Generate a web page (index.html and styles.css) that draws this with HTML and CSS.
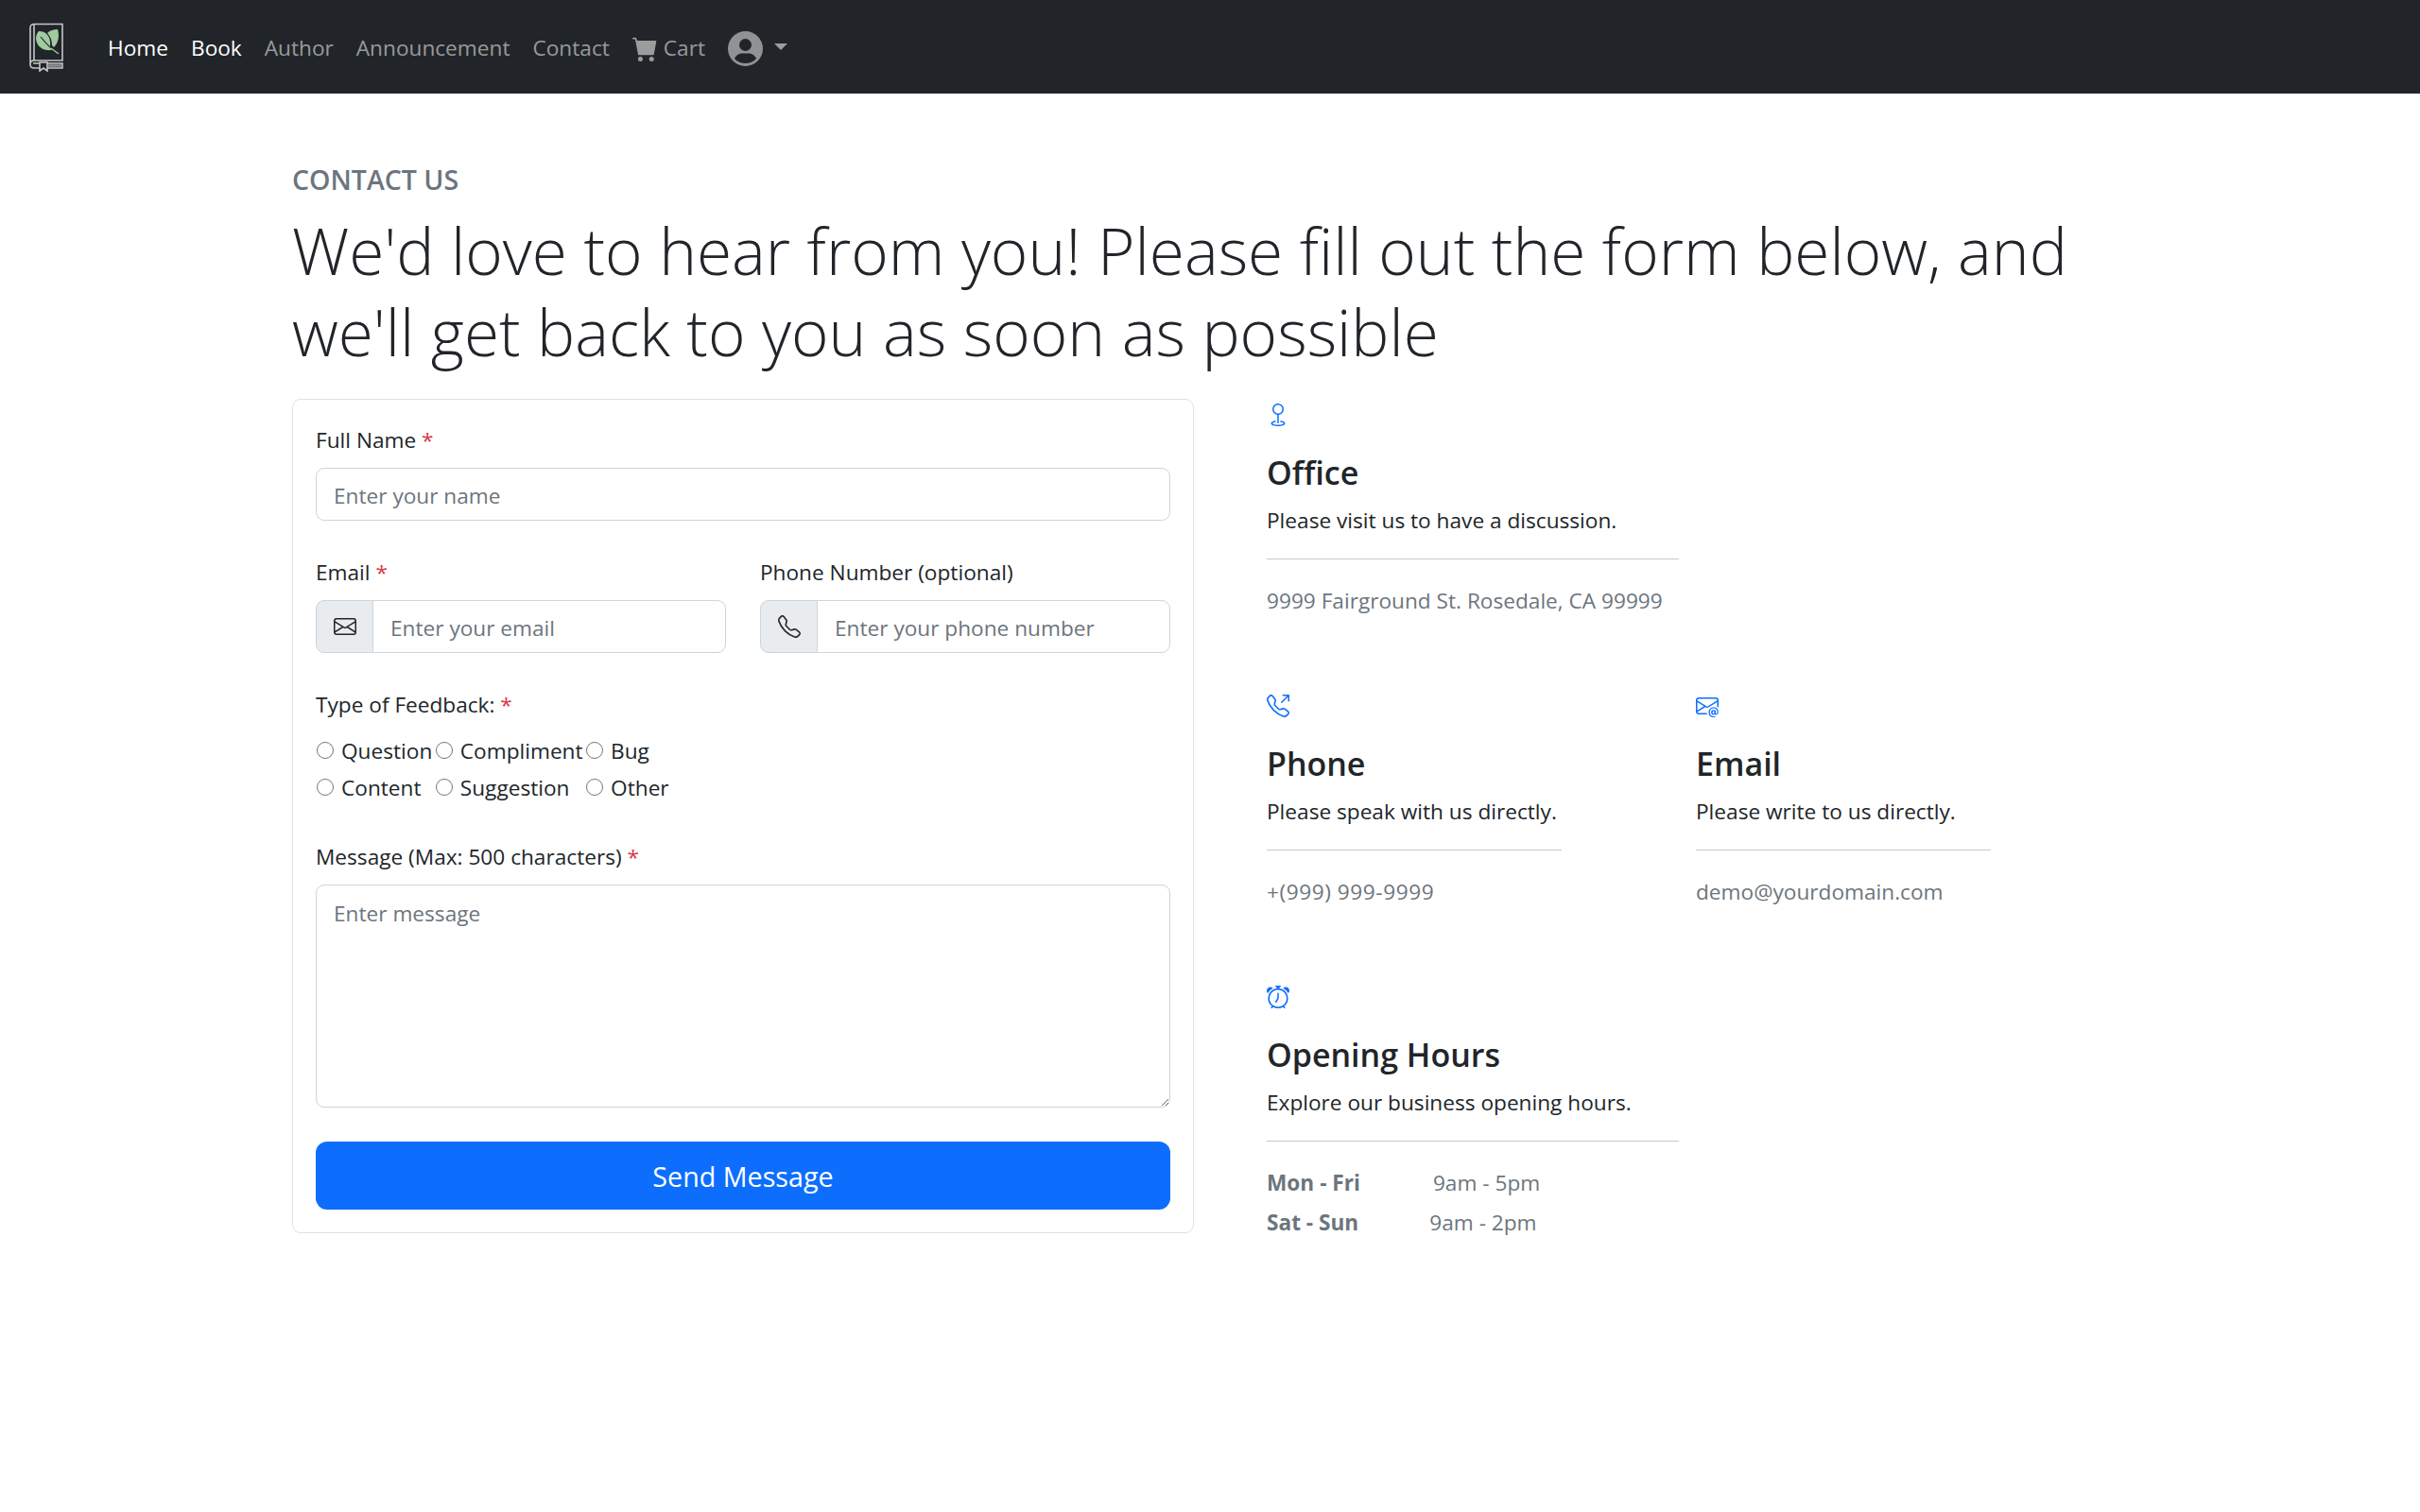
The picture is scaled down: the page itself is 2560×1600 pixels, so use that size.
FILE: index.html
```html
<!DOCTYPE html>
<html lang="en">
<head>
    <meta charset="UTF-8">
    <meta name="viewport" content="width=device-width, initial-scale=1.0">
    <title>Contact Us</title>
    <link rel="stylesheet" href="styles.css">
</head>
<body>
    <nav class="navbar">
        <a class="brand" href="#">
            <svg width="38" height="52" viewBox="0 0 38 52" fill="none" stroke="#c4c6c8" stroke-width="1.6">
                <path d="M6 1.5H36V40H6C3.5 40 2 41.5 2 44V5C2 3 3.5 1.5 6 1.5Z"/>
                <path d="M6 2V40"/>
                <path d="M2 44C2 46.5 3.5 48 6 48H12M20 48H36V43H20M12 43H5"/>
                <path d="M12 42V51L16 48L20 51V42Z"/>
                <path d="M21 45.5H36" stroke-width="2.5" stroke="#8e9093"/>
                <path d="M11 9C19 9 24 15 23 24C23 26 24 27 25 29C16 30 9 26 8 17C8 14 9 11 11 9Z" fill="#9fcb9f" stroke="none"/>
                <path d="M31 7C33 14 32 21 27 26L25 24C25 17 22 13 20 11C23 8 27 7 31 7Z" fill="#9fcb9f" stroke="none"/>
                <path d="M13 15C17 20 24 28 32 33" stroke="#212529" stroke-width="1.2"/>
                <path d="M24 27L32 33" stroke="#9fcb9f" stroke-width="1.4"/>
            </svg>
        </a>
        <ul class="nav-list">
            <li><a class="nav-link active" href="#">Home</a></li>
            <li><a class="nav-link active" href="#">Book</a></li>
            <li><a class="nav-link" href="#">Author</a></li>
            <li><a class="nav-link" href="#">Announcement</a></li>
            <li><a class="nav-link" href="#">Contact</a></li>
            <li>
                <a class="nav-link cart-link" href="#">
                    <svg class="cart-icon" viewBox="0 0 16 16" fill="currentColor">
                        <path d="M0 1.5A.5.5 0 0 1 .5 1H2a.5.5 0 0 1 .485.379L2.89 3H14.5a.5.5 0 0 1 .491.592l-1.5 8A.5.5 0 0 1 13 12H4a.5.5 0 0 1-.491-.408L2.01 3.607 1.61 2H.5a.5.5 0 0 1-.5-.5z"/>
                        <path d="M5 13a1.5 1.5 0 1 0 0 3 1.5 1.5 0 0 0 0-3zm7 0a1.5 1.5 0 1 0 0 3 1.5 1.5 0 0 0 0-3z"/>
                    </svg>
                    Cart
                </a>
            </li>
            <li>
                <a class="nav-link user-link" href="#">
                    <svg class="user-icon" viewBox="0 0 37 37">
                        <circle cx="18.5" cy="18.5" r="18.5" fill="#909294"/>
                        <circle cx="18.5" cy="14.5" r="6.5" fill="#212529"/>
                        <path d="M7 29C9 25 12 23.5 15 23.5H22C25 23.5 28 25 30 29C27 32.5 23 34 18.500 34C14 34 10 32.500 7 29Z" fill="#212529"/>
                    </svg>
                    <span class="caret"></span>
                </a>
            </li>
        </ul>
    </nav>

    <main class="container">
        <h5 class="eyebrow">CONTACT US</h5>
        <h1 class="lead-title">We'd love to hear from you! Please fill out the form below, and we'll get back to you as soon as possible</h1>

        <div class="columns">
            <form class="card">
                <div class="field">
                    <label class="field-label" for="fullName">Full Name <span class="req">*</span></label>
                    <input class="control" type="text" id="fullName" placeholder="Enter your name">
                </div>

                <div class="field two-up">
                    <div>
                        <label class="field-label" for="email">Email <span class="req">*</span></label>
                        <div class="input-group">
                            <span class="addon">
                                <svg class="bi" viewBox="0 0 16 16" fill="currentColor"><path d="M0 4a2 2 0 0 1 2-2h12a2 2 0 0 1 2 2v8a2 2 0 0 1-2 2H2a2 2 0 0 1-2-2V4Zm2-1a1 1 0 0 0-1 1v.217l7 4.2 7-4.2V4a1 1 0 0 0-1-1H2Zm13 2.383-4.708 2.825L15 11.105V5.383Zm-.034 6.876-5.64-3.471L8 9.583l-1.326-.795-5.64 3.47A1 1 0 0 0 2 13h12a1 1 0 0 0 .966-.741ZM1 11.105l4.708-2.897L1 5.383v5.722Z"/></svg>
                            </span>
                            <input class="control" type="email" id="email" placeholder="Enter your email">
                        </div>
                    </div>
                    <div>
                        <label class="field-label" for="phone">Phone Number (optional)</label>
                        <div class="input-group">
                            <span class="addon">
                                <svg class="bi" viewBox="0 0 16 16" fill="currentColor"><path d="M3.654 1.328a.678.678 0 0 0-1.015-.063L1.605 2.3c-.483.484-.661 1.169-.45 1.77a17.568 17.568 0 0 0 4.168 6.608 17.569 17.569 0 0 0 6.608 4.168c.601.211 1.286.033 1.77-.45l1.034-1.034a.678.678 0 0 0-.063-1.015l-2.307-1.794a.678.678 0 0 0-.58-.122l-2.19.547a1.745 1.745 0 0 1-1.657-.459L5.482 8.062a1.745 1.745 0 0 1-.46-1.657l.548-2.19a.678.678 0 0 0-.122-.58L3.654 1.328zM1.884.511a1.745 1.745 0 0 1 2.612.163L6.29 2.98c.329.423.445.974.315 1.494l-.547 2.19a.678.678 0 0 0 .178.643l2.457 2.457a.678.678 0 0 0 .644.178l2.189-.547a1.745 1.745 0 0 1 1.494.315l2.306 1.794c.829.645.905 1.87.163 2.611l-1.034 1.034c-.74.74-1.846 1.065-2.877.702a18.634 18.634 0 0 1-7.01-4.42 18.634 18.634 0 0 1-4.42-7.009c-.362-1.03-.037-2.137.703-2.877L1.885.511z"/></svg>
                            </span>
                            <input class="control" type="tel" id="phone" placeholder="Enter your phone number">
                        </div>
                    </div>
                </div>

                <div class="field">
                    <span class="field-label">Type of Feedback: <span class="req">*</span></span>
                    <div class="radio-grid">
                        <label class="radio"><input type="radio" name="feedback"> Question</label>
                        <label class="radio"><input type="radio" name="feedback"> Compliment</label>
                        <label class="radio"><input type="radio" name="feedback"> Bug</label>
                        <label class="radio"><input type="radio" name="feedback"> Content</label>
                        <label class="radio"><input type="radio" name="feedback"> Suggestion</label>
                        <label class="radio"><input type="radio" name="feedback"> Other</label>
                    </div>
                </div>

                <div class="field">
                    <label class="field-label" for="message">Message (Max: 500 characters) <span class="req">*</span></label>
                    <textarea class="control message" id="message" placeholder="Enter message"></textarea>
                </div>

                <button class="send-btn" type="button">Send Message</button>
            </form>

            <div class="info">
                <section class="info-block wide">
                    <svg class="bi blue" viewBox="0 0 16 16" fill="currentColor"><path fill-rule="evenodd" d="M8 1a3 3 0 1 0 0 6 3 3 0 0 0 0-6zM4 4a4 4 0 1 1 4.5 3.969V13.5a.5.5 0 0 1-1 0V7.97A4 4 0 0 1 4 3.999zm2.493 8.574a.5.5 0 0 1-.411.575c-.712.118-1.28.295-1.655.493a1.319 1.319 0 0 0-.37.265.301.301 0 0 0-.057.09V14l.002.008a.147.147 0 0 0 .016.033.617.617 0 0 0 .145.15c.165.13.435.27.813.395.751.25 1.82.414 3.024.414s2.273-.163 3.024-.414c.378-.126.648-.265.813-.395a.619.619 0 0 0 .146-.15.148.148 0 0 0 .015-.033L12 14v-.004a.301.301 0 0 0-.057-.09 1.318 1.318 0 0 0-.37-.264c-.376-.198-.943-.375-1.655-.493a.5.5 0 1 1 .164-.986c.77.127 1.452.328 1.957.594C12.5 13 13 13.4 13 14c0 .426-.26.752-.544.977-.29.228-.68.413-1.116.558-.878.293-2.059.465-3.34.465-1.281 0-2.462-.172-3.34-.465-.436-.145-.826-.33-1.116-.558C3.26 14.752 3 14.426 3 14c0-.599.5-1 .961-1.243.505-.266 1.187-.467 1.957-.594a.5.5 0 0 1 .575.411z"/></svg>
                    <h4>Office</h4>
                    <p>Please visit us to have a discussion.</p>
                    <hr>
                    <p class="muted">9999 Fairground St. Rosedale, CA 99999</p>
                </section>

                <div class="info-row">
                    <section class="info-block">
                        <svg class="bi blue" viewBox="0 0 16 16" fill="currentColor"><path d="M3.654 1.328a.678.678 0 0 0-1.015-.063L1.605 2.3c-.483.484-.661 1.169-.45 1.77a17.568 17.568 0 0 0 4.168 6.608 17.569 17.569 0 0 0 6.608 4.168c.601.211 1.286.033 1.77-.45l1.034-1.034a.678.678 0 0 0-.063-1.015l-2.307-1.794a.678.678 0 0 0-.58-.122l-2.19.547a1.745 1.745 0 0 1-1.657-.459L5.482 8.062a1.745 1.745 0 0 1-.46-1.657l.548-2.19a.678.678 0 0 0-.122-.58L3.654 1.328zM1.884.511a1.745 1.745 0 0 1 2.612.163L6.29 2.98c.329.423.445.974.315 1.494l-.547 2.19a.678.678 0 0 0 .178.643l2.457 2.457a.678.678 0 0 0 .644.178l2.189-.547a1.745 1.745 0 0 1 1.494.315l2.306 1.794c.829.645.905 1.87.163 2.611l-1.034 1.034c-.74.74-1.846 1.065-2.877.702a18.634 18.634 0 0 1-7.01-4.42 18.634 18.634 0 0 1-4.42-7.009c-.362-1.03-.037-2.137.703-2.877L1.885.511zM11 .5a.5.5 0 0 1 .5-.5h4a.5.5 0 0 1 .5.5v4a.5.5 0 0 1-1 0V1.707l-4.146 4.147a.5.5 0 0 1-.708-.708L14.293 1H11.5a.5.5 0 0 1-.5-.5z"/></svg>
                        <h4>Phone</h4>
                        <p>Please speak with us directly.</p>
                        <hr>
                        <p class="muted tel">+(999) 999-9999</p>
                    </section>
                    <section class="info-block">
                        <svg class="bi blue" viewBox="0 0 16 16" fill="currentColor"><path d="M2 2a2 2 0 0 0-2 2v8.01A2 2 0 0 0 2 14h5.5a.5.5 0 0 0 0-1H2a1 1 0 0 1-.966-.741l5.64-3.471L8 9.583l7-4.2V8.5a.5.5 0 0 0 1 0V4a2 2 0 0 0-2-2H2Zm3.708 6.208L1 11.105V5.383l4.708 2.825ZM1 4.217V4a1 1 0 0 1 1-1h12a1 1 0 0 1 1 1v.217l-7 4.2-7-4.2Z"/><path d="M14.247 14.269c1.01 0 1.587-.857 1.587-2.025v-.21C15.834 10.43 14.64 9 12.52 9h-.035C10.42 9 9 10.36 9 12.432v.214C9 14.82 10.438 16 12.358 16h.044c.594 0 1.018-.074 1.237-.175v-.73c-.245.11-.673.18-1.18.18h-.044c-1.334 0-2.571-.788-2.571-2.655v-.157c0-1.657 1.058-2.724 2.64-2.724h.04c1.535 0 2.484 1.05 2.484 2.326v.118c0 .975-.324 1.39-.639 1.39-.232 0-.41-.148-.41-.42v-2.19h-.906v.569h-.03c-.084-.298-.368-.63-.954-.63-.778 0-1.259.555-1.259 1.4v.528c0 .892.49 1.434 1.26 1.434.471 0 .896-.227 1.014-.643h.043c.118.42.617.648 1.12.648Zm-2.453-1.588v-.227c0-.546.227-.791.573-.791.297 0 .572.192.572.708v.367c0 .573-.253.744-.564.744-.354 0-.581-.215-.581-.8Z"/></svg>
                        <h4>Email</h4>
                        <p>Please write to us directly.</p>
                        <hr>
                        <p class="muted">demo@yourdomain.com</p>
                    </section>
                </div>

                <section class="info-block wide">
                    <svg class="bi blue" viewBox="0 0 16 16" fill="currentColor"><path d="M8.5 5.5a.5.5 0 0 0-1 0v3.362l-1.429 2.38a.5.5 0 1 0 .858.515l1.5-2.5A.5.5 0 0 0 8.5 9V5.5z"/><path d="M6.5 0a.5.5 0 0 0 0 1H7v1.07a7.001 7.001 0 0 0-3.273 12.474l-.602.602a.5.5 0 0 0 .707.708l.746-.746A6.97 6.97 0 0 0 8 16a6.97 6.97 0 0 0 3.422-.892l.746.746a.5.5 0 0 0 .707-.708l-.601-.602A7.001 7.001 0 0 0 9 2.07V1h.5a.5.5 0 0 0 0-1h-3zm1.038 3.018a6.093 6.093 0 0 1 .924 0 6 6 0 1 1-.924 0zM0 3.5c0 .753.333 1.429.86 1.887A8.035 8.035 0 0 1 4.387 1.86 2.5 2.5 0 0 0 0 3.5zM13.5 1c-.753 0-1.429.333-1.887.86a8.035 8.035 0 0 1 3.527 3.527A2.5 2.5 0 0 0 13.5 1z"/></svg>
                    <h4>Opening Hours</h4>
                    <p>Explore our business opening hours.</p>
                    <hr>
                    <p class="muted hours"><b>Mon - Fri</b><span class="hours-mon">9am - 5pm</span></p>
                    <p class="muted hours"><b>Sat - Sun</b><span class="hours-sat">9am - 2pm</span></p>
                </section>
            </div>
        </div>
    </main>
</body>
</html>
```

FILE: styles.css
```css
* {
    box-sizing: border-box;
}
body {
    margin: 0;
    background-color: #fff;
    color: #212529;
    font-family: 'Open Sans', 'Noto Sans', sans-serif;
    font-size: 22.65px;
    line-height: 36px;
}
a {
    text-decoration: none;
}

/* navbar */
.navbar {
    display: flex;
    align-items: center;
    height: 99px;
    padding-left: 30px;
    background-color: #212529;
}
.brand {
    display: flex;
    width: 72px;
}
.nav-list {
    display: flex;
    align-items: center;
    margin: 3px 0 0 0;
    padding: 0;
    list-style: none;
}
.nav-link {
    display: flex;
    align-items: center;
    padding: 0 12px;
    color: rgba(255, 255, 255, 0.55);
}
.nav-link.active {
    color: #fff;
}
.cart-link {
    gap: 6px;
}
.cart-icon {
    width: 27px;
    height: 27px;
}
.user-icon {
    width: 37px;
    height: 37px;
}
.caret {
    margin-left: 12px;
    margin-bottom: 4px;
    border-top: 7px solid rgba(255, 255, 255, 0.55);
    border-left: 7px solid transparent;
    border-right: 7px solid transparent;
}

/* page */
.container {
    width: 1942px;
    margin: 0 auto;
    padding-top: 73px;
}
.eyebrow {
    margin: 0 0 14px 0;
    font-size: 28.5px;
    font-weight: 600;
    line-height: 36px;
    color: #6c757d;
}
.lead-title {
    margin: 0 0 28px 0;
    font-size: 67.5px;
    font-weight: 300;
    line-height: 86px;
}
.columns {
    display: flex;
    gap: 77px;
    align-items: flex-start;
}

/* form */
.card {
    width: 954px;
    padding: 24px;
    border: 1px solid #dfe0e1;
    border-radius: 9px;
}
.field {
    margin-bottom: 36px;
}
.field-label {
    display: block;
    padding-top: 1px;
    margin-bottom: 11px;
}
.req {
    color: #dc3545;
}
.control {
    display: block;
    width: 100%;
    height: 56px;
    padding: 2px 18px 0 18px;
    border: 1px solid #ced4da;
    border-radius: 9px;
    font-family: inherit;
    font-size: 22.65px;
    color: #212529;
}
.control::placeholder {
    color: #6c757d;
}
.two-up {
    display: grid;
    grid-template-columns: 1fr 1fr;
    gap: 36px;
}
.input-group {
    display: flex;
}
.input-group .control {
    flex: 1;
    min-width: 0;
    border-radius: 0 9px 9px 0;
}
.addon {
    display: flex;
    align-items: center;
    justify-content: center;
    flex: none;
    width: 61px;
    height: 56px;
    margin-right: -1px;
    border: 1px solid #ced4da;
    border-radius: 9px 0 0 9px;
    background-color: #e9ecef;
}
.bi {
    display: block;
    width: 24px;
    height: 24px;
}
.radio-grid {
    display: inline-grid;
    grid-template-columns: repeat(3, auto);
    row-gap: 3px;
    margin-top: 2px;
}
.radio {
    display: flex;
    align-items: center;
    gap: 8px;
    padding-right: 2.5px;
}
.radio input {
    width: 18px;
    height: 18px;
    margin: 0 0 3px 1px;
}
.message {
    height: 236px;
    padding: 12px 18px;
    line-height: 36px;
}
.send-btn {
    display: block;
    width: 100%;
    height: 72px;
    border: none;
    border-radius: 12px;
    background-color: #0d6efd;
    color: #fff;
    font-family: inherit;
    font-size: 28.7px;
}

/* contact info */
.info {
    padding-top: 5px;
}
.info-block {
    width: 312px;
    height: 308px;
}
.info-block.wide {
    width: 436px;
}
.info-row {
    display: flex;
    gap: 142px;
}
.info-block h4 {
    margin: 22px 0 0 0;
    font-size: 34px;
    font-weight: 600;
    line-height: 54px;
}
.info-block p {
    margin: 6px 0 0 0;
    white-space: nowrap;
}
.info-block hr {
    margin: 22px 0 26px 0;
    border: 0;
    border-top: 1px solid #c6c7c8;
}
.muted {
    color: #6c757d;
}
.tel {
    letter-spacing: 0.55px;
}
.info-block .hours {
    margin: 0 0 6px 0;
}
.hours b {
    display: inline-block;
    font-weight: 700;
}
.hours-mon {
    margin-left: 77px;
}
.hours-sat {
    margin-left: 75px;
}
.blue {
    color: #0d6efd;
}
```
